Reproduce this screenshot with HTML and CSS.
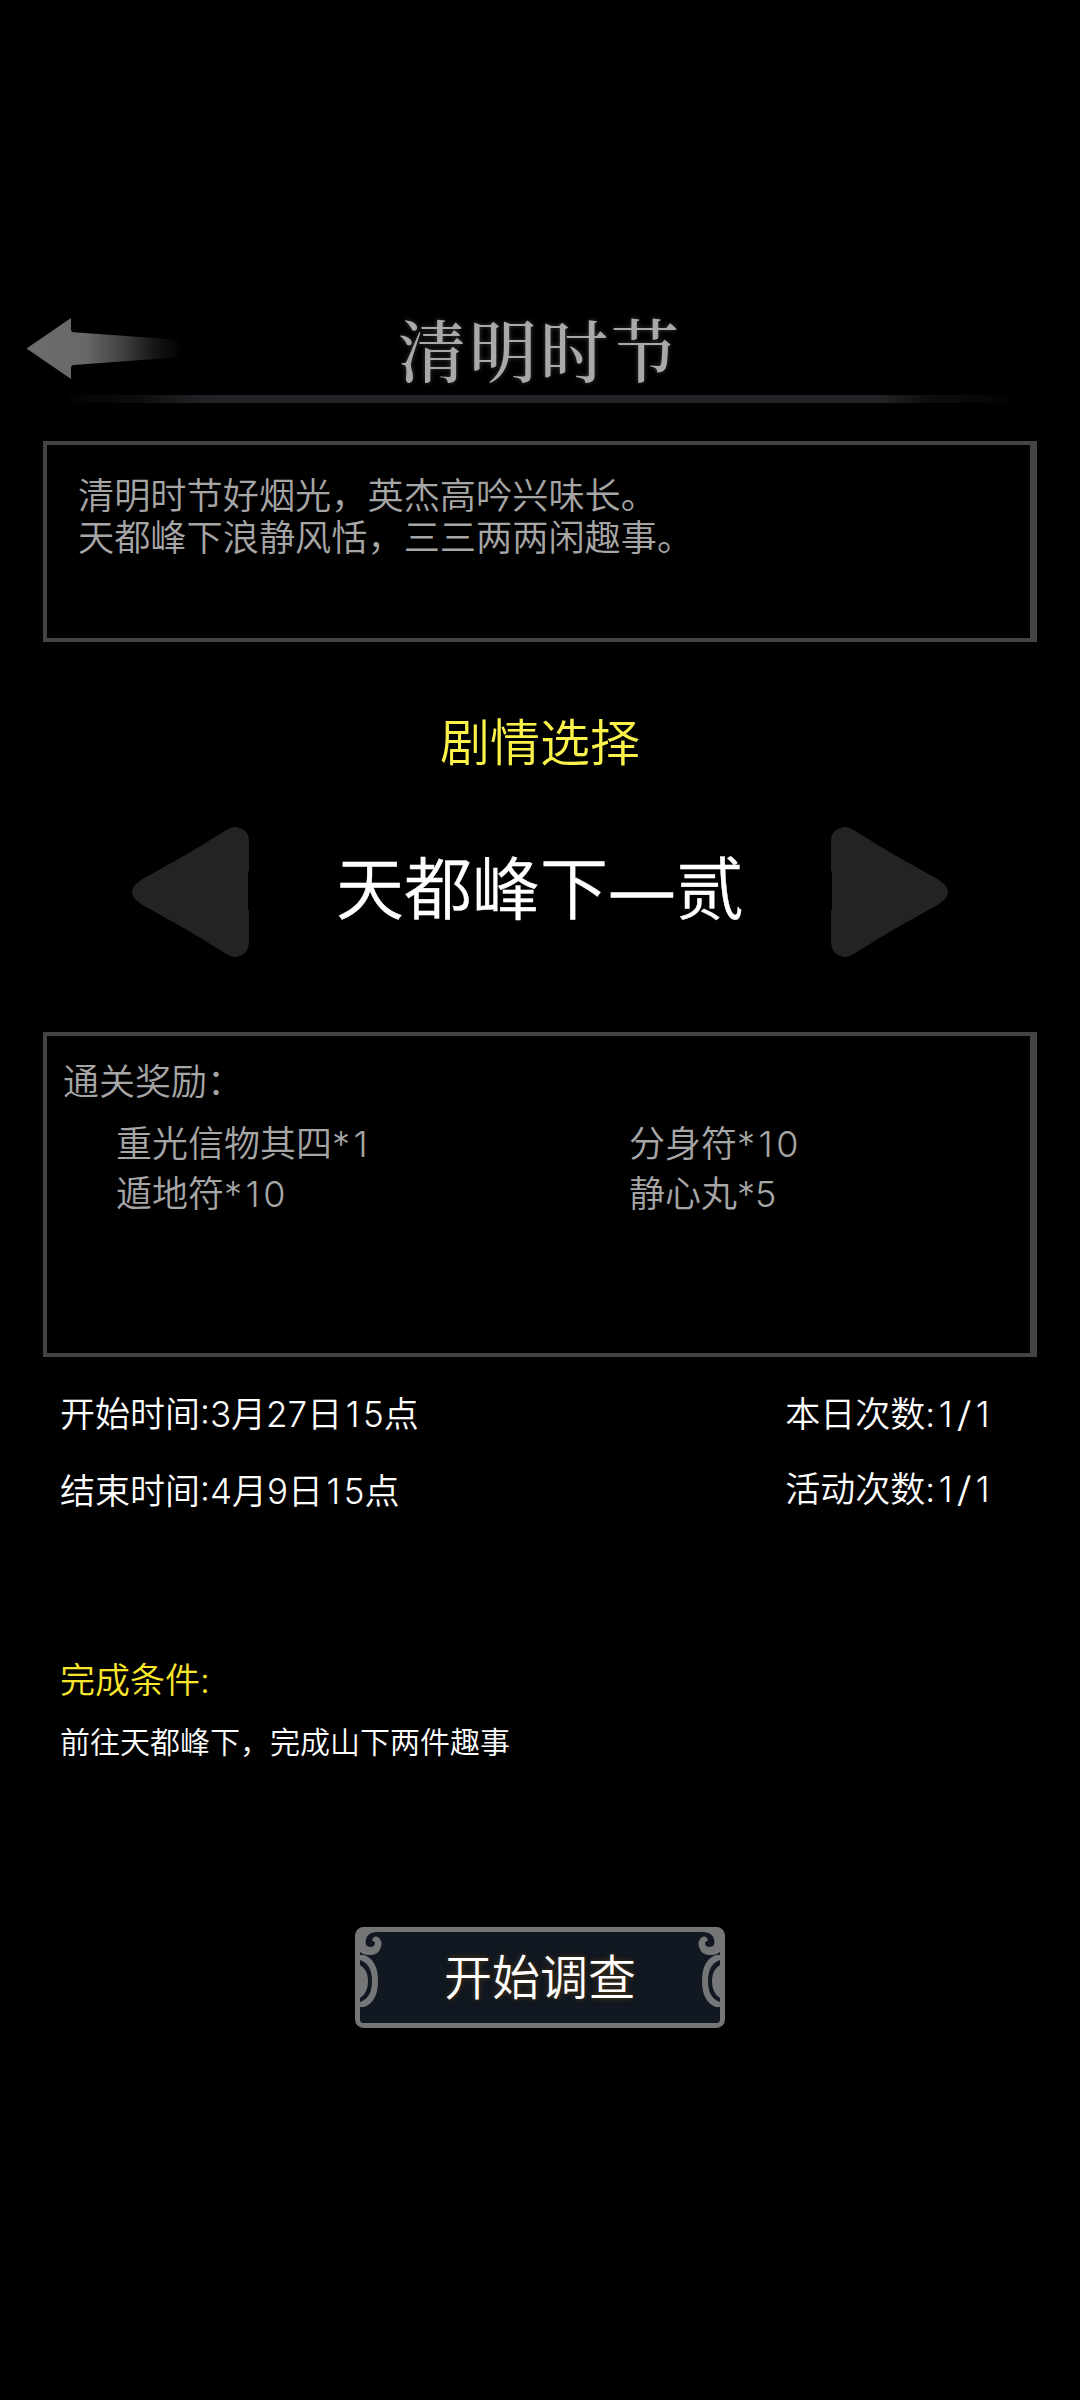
FILE: index.html
```html
<!DOCTYPE html>
<html lang="zh-CN">
<head>
<meta charset="utf-8">
<title>清明时节</title>
<link rel="stylesheet" href="styles.css">
</head>
<body>
<main class="screen">
  <header class="header">
    <svg class="back" width="190" height="78" viewBox="0 0 190 78">
      <defs>
        <linearGradient id="fade" gradientUnits="userSpaceOnUse" x1="26" y1="0" x2="182" y2="0">
          <stop offset="0" stop-color="#6c6c6c"/>
          <stop offset=".38" stop-color="#686868"/>
          <stop offset=".6" stop-color="#444"/>
          <stop offset=".82" stop-color="#161616"/>
          <stop offset="1" stop-color="#000"/>
        </linearGradient>
      </defs>
      <path d="M26.500 38.500 71 8V19.500Q71 22 74 22.200L182 30V47L74 55Q71 55.200 71 58V69Z" fill="url(#fade)"/>
    </svg>
    <h1 class="title">清明时节</h1>
  </header>
  <div class="rule"></div>

  <section class="panel intro">
    <p>清明时节好烟光，英杰高吟兴味长。</p>
    <p>天都峰下浪静风恬，三三两两闲趣事。</p>
  </section>

  <h2 class="subtitle">剧情选择</h2>

  <div class="picker">
    <svg class="tri" width="117" height="130" viewBox="0 0 117 130">
      <path d="M104 0Q98 0 91 5L57 26L16 49Q0 57 0 65Q0 73 16 81L57 104L91 125Q98 130 104 130Q117 128 117 114V84L116 82V45L117 43V14Q117 2 104 0Z" fill="#232323"/>
    </svg>
    <div class="chapter">天都峰下<span class="dash">—</span>贰</div>
    <svg class="tri flip" width="117" height="130" viewBox="0 0 117 130">
      <path d="M104 0Q98 0 91 5L57 26L16 49Q0 57 0 65Q0 73 16 81L57 104L91 125Q98 130 104 130Q117 128 117 114V84L116 82V45L117 43V14Q117 2 104 0Z" fill="#232323"/>
    </svg>
  </div>

  <section class="panel rewards">
    <div class="rewards-head">通关奖励：</div>
    <div class="rewards-grid">
      <div>重光信物其四*<span class="one">1</span></div><div>分身符*<span class="one">1</span>0</div>
      <div>遁地符*<span class="one">1</span>0</div><div>静心丸*5</div>
    </div>
  </section>

  <section class="info">
    <div class="times">
      <div>开始时间:3月27日<span class="one">1</span>5点</div>
      <div>结束时间:4月9日<span class="one">1</span>5点</div>
    </div>
    <div class="counts">
      <div>本日次数:<span class="one">1</span><span class="slash">/</span><span class="one">1</span></div>
      <div>活动次数:<span class="one">1</span><span class="slash">/</span><span class="one">1</span></div>
    </div>
  </section>

  <section class="goal">
    <h3 class="goal-head">完成条件:</h3>
    <p class="goal-text">前往天都峰下，完成山下两件趣事</p>
  </section>

  <button class="start">
    <svg class="frame" width="370" height="101" viewBox="0 0 370 101">
      <defs>
        <g id="ornament">
          <path d="M5 28H9Q23 33 23 54Q23 75 9 80H5V75Q17 71 17 54Q17 37 5 33Z" fill="#747678"/>
          <path d="M5 38Q13 43 13 54Q13 66 5 71Z" fill="#747678"/>
          <path d="M5 5H25Q13 4 11 12Q9 19 15 20Q20 20 20 16Q20 14 17 14Q18 8 23 10Q28 14 26 20Q23 29 14 28Q8 28 5 25Z" fill="#747678"/>
        </g>
      </defs>
      <rect x="2.500" y="2.500" width="365" height="96" rx="6" fill="#111821" stroke="#747678" stroke-width="5"/>
      <use href="#ornament"/>
      <use href="#ornament" transform="translate(370 0) scale(-1 1)"/>
    </svg>
    <span class="start-label">开始调查</span>
  </button>
</main>
</body>
</html>
```
FILE: styles.css
```css
* { box-sizing: border-box; }
body {
  margin: 0;
  background: #000;
  font-family: Inter, "Noto Sans CJK SC", sans-serif;
  font-weight: 350;
}
h1, h2, h3, p { margin: 0; font-weight: inherit; }
.screen {
  width: 1080px;
  height: 2400px;
  padding-top: 310px;
  display: flex;
  flex-direction: column;
  background: #000;
  overflow: hidden;
}
.header {
  height: 85px;
  display: grid;
  grid-template-columns: 190px 1fr 190px;
}
.title {
  font-family: KaiTi, STKaiti, "AR PL UKai CN", "Noto Serif CJK SC", "Noto Sans CJK SC", serif;
  font-weight: 500;
  text-align: center;
  font-size: 68px;
  line-height: 76px;
  letter-spacing: 3px;
  color: #a9a9a9;
  text-shadow: 0 0 4px #444;
  white-space: nowrap;
}
.rule {
  height: 8px;
  margin: 0 70px;
  background: linear-gradient(90deg, #040404, #0c0c0e 7%, #202024 13%, #242428 17%, #242428 86%, #0e0e0e 91%, #030303);
}
.panel {
  width: 994px;
  margin-left: 43px;
  border: 4px solid #444;
  border-right-width: 7px;
  color: #a6a6a6;
  font-size: 36px;
}
.intro {
  height: 201px;
  margin-top: 38px;
  padding: 30px 0 0 31px;
  line-height: 42px;
  font-size: 36.200px;
}
.subtitle {
  margin-top: 70px;
  text-align: center;
  font-size: 50px;
  line-height: 63px;
  color: #fbf24a;
}
.picker {
  margin-top: 52px;
  padding: 0 132px;
  height: 130px;
  display: flex;
  justify-content: space-between;
}
.flip { transform: scaleX(-1); }
.chapter {
  font-family: "Noto Sans CJK SC", sans-serif;
  font-size: 68px;
  line-height: 116px;
  color: #fff;
  white-space: nowrap;
  -webkit-text-stroke: .4px #fff;
}
.dash {
  display: inline-block;
  width: 68px;
  text-align: center;
  transform: scaleX(1.12);
  -webkit-text-stroke: 1.500px #fff;
}
.rewards {
  height: 325px;
  margin-top: 75px;
  padding: 20px 0 0 16px;
}
.rewards-head { line-height: 52px; }
.rewards-grid {
  margin: 11px 0 0 53px;
  display: grid;
  grid-template-columns: 513px 1fr;
  line-height: 50px;
}
.one { margin: 0 3.500px; }
.info {
  margin-top: 32px;
  padding: 0 87px 0 60px;
  display: flex;
  justify-content: space-between;
  font-size: 35px;
  color: #fff;
}
.times, .counts { display: flex; flex-direction: column; line-height: 50px; }
.times { gap: 27px; }
.counts { gap: 25px; }
.slash {
  display: inline-block;
  margin: 0 2px;
  transform: scaleX(1.25);
}
.goal { margin: 139px 0 0 60px; }
.goal-head { font-size: 35px; line-height: 50px; color: #f9e62a; }
.goal-text { margin-top: 16px; font-size: 30px; line-height: 42px; color: #fff; }
.start {
  position: relative;
  width: 370px;
  height: 101px;
  margin: 164px 0 0 355px;
  padding: 0;
  border: 0;
  background: none;
  font: inherit;
  display: flex;
  align-items: center;
  justify-content: center;
}
.frame { position: absolute; inset: 0; }
.start-label {
  position: relative;
  font-size: 48px;
  line-height: 60px;
  color: #fff;
  text-shadow: 0 0 4px #3a2c18, 0 0 6px #3a2c18;
}
```
